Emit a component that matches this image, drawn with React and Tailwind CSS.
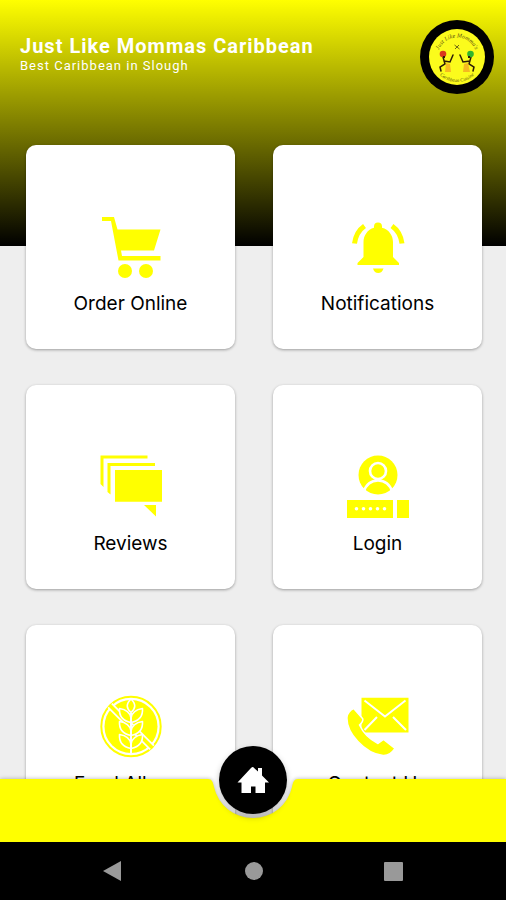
import React from "react";

const Y = "#ffff00";

function CartIcon() {
  return (
    <svg viewBox="0 0 64 64" className="size-16" fill={Y} aria-hidden="true">
      <path d="M3 2H15L18.5 14.5H61.5L55 35.5H22L23 41H61.5V45.5H19.5L12 6H3Z" />
      <circle cx="26" cy="56" r="7" />
      <circle cx="47" cy="56" r="7" />
    </svg>
  );
}

function BellIcon() {
  return (
    <svg viewBox="0 0 64 64" className="size-16" fill={Y} aria-hidden="true">
      <path d="M32 7.500a4 4 0 0 1 4 4v1.200C43 14.500 47 20.500 47 27V42L53 48V50H11.500V48L17.500 42V27C17.500 20.500 21.500 14.500 28 12.700V11.500a4 4 0 0 1 4-4Z" />
      <path d="M27 53.500H37.500Q36 58 32.200 58T27 53.500Z" />
      <path d="M18.500 11Q10 17 8.500 28.500M46 11Q54.500 17 56 28.500" fill="none" stroke={Y} strokeWidth="5" />
    </svg>
  );
}

function ReviewsIcon() {
  return (
    <svg viewBox="0 0 64 64" className="size-16" fill={Y} aria-hidden="true">
      <path d="M1.500 0.500H48.500V3.500H4.500V32L1.500 29Z" />
      <path d="M8.500 8H56V11H11.500V39.500L8.500 37Z" />
      <path d="M16 15H63V46.700H16Z" />
      <path d="M45 50H57V61.500Z" />
    </svg>
  );
}

function LoginIcon() {
  return (
    <svg viewBox="0 0 64 64" className="size-16" fill={Y} aria-hidden="true">
      <circle cx="32" cy="20" r="19.500" />
      <circle cx="32" cy="16" r="8" stroke="#fff" strokeWidth="2.600" />
      <path d="M17.500 37Q21.500 25.500 32 25.500T46.500 37" fill="none" stroke="#fff" strokeWidth="2.600" />
      <path d="M1 45H47V63H1ZM51 45H63V63H51Z" />
      <g fill="#fff">
        <circle cx="10.500" cy="53.700" r="1.800" />
        <circle cx="17.500" cy="53.700" r="1.800" />
        <circle cx="24.500" cy="53.700" r="1.800" />
        <circle cx="31.500" cy="53.700" r="1.800" />
        <circle cx="38.500" cy="53.700" r="1.800" />
      </g>
    </svg>
  );
}

function AllergyIcon() {
  return (
    <svg viewBox="0 0 64 64" className="size-16" fill={Y} aria-hidden="true">
      <circle cx="32" cy="31.500" r="29.700" fill="none" stroke={Y} strokeWidth="2" />
      <circle cx="32" cy="31.500" r="26.500" />
      <path d="M11 10.500L53 52.500" stroke="#fff" strokeWidth="7" />
      <path d="M10.500 10L53.500 53" stroke={Y} strokeWidth="3.600" />
      <g stroke="#fff" strokeWidth="1.600" strokeLinejoin="round">
        <path d="M32 4C37 9 37 13 32 17.500C27 13 27 9 32 4Z" />
        <path d="M32 23C31 17 27 14.500 20.500 13.500C20 21 24 26 32 27.500C40 26 44 21 43.500 13.500C37 14.500 33 17 32 23Z" />
        <path d="M32 36C31 30 27 27.500 20.500 26.500C20 34 24 39 32 40.500C40 39 44 34 43.500 26.500C37 27.500 33 30 32 36Z" />
        <path d="M32 49C31 43 27 40.500 20.500 39.500C20 47 24 52 32 53.500C40 52 44 47 43.500 39.500C37 40.500 33 43 32 49Z" />
        <path d="M32 18V60" strokeWidth="2" />
      </g>
    </svg>
  );
}

function ContactIcon() {
  return (
    <svg viewBox="0 0 64 64" className="size-16" fill={Y} aria-hidden="true">
      <path d="M15.500 2.700H62.500V37.500H15.500Z" />
      <path d="M18.500 5.500L39 21.500L59.500 5.500M18.500 35L31 22M47 22L60 35" fill="none" stroke="#fff" strokeWidth="2" />
      <path
        d="M7.700 13.500L16.500 23.500Q18 26 13.500 30Q19 42 32 48.500L37.500 44.500L49 53.500Q44 61 37 60.500C19 58.500 0 38 1 22Q2 16 7.700 13.500Z"
        stroke="#fff"
        strokeWidth="1.500"
      />
    </svg>
  );
}

function Logo() {
  return (
    <svg viewBox="0 0 74 74" className="size-[74px] shrink-0" role="img" aria-label="Just Like Mommas logo">
      <defs>
        <path id="logo-top" d="M17.500 37A19.500 19.500 0 0 1 56.500 37" />
        <path id="logo-bottom" d="M12 37A25 25 0 0 0 62 37" />
      </defs>
      <circle cx="37" cy="37" r="37" fill="#000" />
      <circle cx="37" cy="37" r="28" fill="#fbfb1c" />
      <g fill="#5b5410" fontFamily="'Liberation Serif', serif" fontStyle="italic" textAnchor="middle">
        <text fontSize="6">
          <textPath href="#logo-top" startOffset="50%">Just Like Momma's</textPath>
        </text>
        <text fontSize="5">
          <textPath href="#logo-bottom" startOffset="50%">Caribbean Cuisine</textPath>
        </text>
      </g>
      <path d="M34.500 25L39.500 29M39 25L35 29" stroke="#6b6414" strokeWidth="1" />
      <g fill="none" stroke="#2b1b08" strokeWidth="1.500" strokeLinecap="round">
        <path d="M23 37L25 44L20 47L21 51M24 41L30 42L33 35" />
        <path d="M51 37L49 44L54 47L53 51M50 41L43 42L40 35" />
      </g>
      <path d="M26 43L30 44L31 52L25 52ZM48 43L44 44L43 52L50 52Z" fill="#f5b921" />
      <circle cx="23" cy="34" r="3.300" fill="#d8391d" />
      <circle cx="50.500" cy="34" r="3.300" fill="#2fb52c" />
      <path d="M23 37L25 37M48 37L50 37" stroke="#2b1b08" strokeWidth="2" />
    </svg>
  );
}

const tiles = [
  { label: "Order Online", Icon: CartIcon },
  { label: "Notifications", Icon: BellIcon },
  { label: "Reviews", Icon: ReviewsIcon },
  { label: "Login", Icon: LoginIcon },
  { label: "Food Allergy", Icon: AllergyIcon },
  { label: "Contact Us", Icon: ContactIcon },
];

function Tile({ label, Icon }) {
  return (
    <button
      type="button"
      className="flex h-[204px] flex-col items-center rounded-[10px] bg-white pt-[70px] shadow-[0_1px_3px_rgba(0,0,0,0.35)]"
    >
      <Icon />
      <span className="mt-3 font-['Inter','Liberation_Sans',sans-serif] text-[19px] leading-[26px] font-normal text-black">
        {label}
      </span>
    </button>
  );
}

function TabBar() {
  return (
    <nav aria-label="Main" className="absolute inset-x-0 bottom-0 h-[63px]">
      <div className="flex h-full drop-shadow-[0_0_2px_rgba(0,0,0,0.3)]">
        <div className="flex-1 bg-[#ffff00]" />
        <svg viewBox="0 0 90 63" className="h-[63px] w-[90px] shrink-0" fill={Y} aria-hidden="true">
          <path d="M0 0C4 0 5 3 6 8A40 40 0 0 0 84 8C85 3 86 0 90 0V63H0Z" />
        </svg>
        <div className="flex-1 bg-[#ffff00]" />
      </div>
      <button
        type="button"
        aria-label="Home"
        className="absolute -top-[33px] left-1/2 flex size-[68px] -translate-x-1/2 items-center justify-center rounded-full bg-black shadow-[0_3px_6px_rgba(0,0,0,0.25)]"
      >
        <svg viewBox="0 0 32 28" className="h-7 w-8" fill="#fff" aria-hidden="true">
          <path d="M16 1L21 5.500V2H25V9.500L32 16.500H28V27H18.500V20.500H14V27H4.500V16.500H0.500L14 2Q16 0 17 2Z" />
        </svg>
      </button>
    </nav>
  );
}

function SystemBar() {
  return (
    <div className="h-[58px] shrink-0 bg-black">
      <div className="mx-auto flex h-full w-[300px] items-center justify-between">
        <button type="button" aria-label="Back">
          <svg viewBox="0 0 20 20" className="size-5" fill="#999">
            <path d="M0 10L18 0V20Z" />
          </svg>
        </button>
        <button type="button" aria-label="Home screen" className="size-[18px] rounded-full bg-[#999]" />
        <button type="button" aria-label="Recent apps" className="size-[19px] rounded-[1px] bg-[#999]" />
      </div>
    </div>
  );
}

export default function App() {
  return (
    <div className="flex h-screen flex-col overflow-hidden bg-[#eeeeee]">
      <div className="relative min-h-0 flex-1 overflow-hidden">
        <header className="flex h-[246px] items-start justify-between bg-linear-to-b/srgb from-[#ffff00] to-black pt-5 pr-3 pl-5 font-['Roboto',sans-serif] text-white">
          <div className="pt-[14px]">
            <h1 className="text-xl leading-6 font-bold tracking-[1px]">Just Like Mommas Caribbean</h1>
            <p className="text-[13px] leading-4 font-normal tracking-[1px]">Best Caribbean in Slough</p>
          </div>
          <Logo />
        </header>
        <main className="-mt-[101px] grid grid-cols-2 gap-x-[38px] gap-y-9 pr-6 pb-24 pl-[26px]">
          {tiles.map((t) => (
            <Tile key={t.label} {...t} />
          ))}
        </main>
        <TabBar />
      </div>
      <SystemBar />
    </div>
  );
}
